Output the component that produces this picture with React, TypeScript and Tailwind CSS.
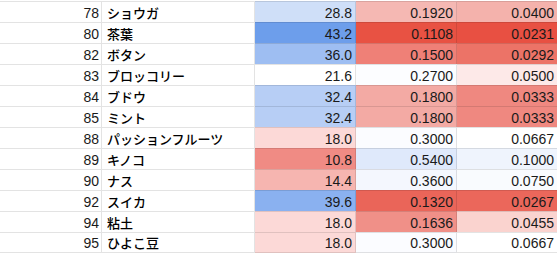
import React from "react";

type Row = {
  n: number;
  name: string;
  c: string;
  d: string;
  e: string;
  cc: string;
  dc: string;
  ec: string;
};

const rows: Row[] = [
  { n: 78, name: "ショウガ", c: "28.8", d: "0.1920", e: "0.0400", cc: "#cfdff8", dc: "#f5b8b3", ec: "#f4b2ac" },
  { n: 80, name: "茶葉", c: "43.2", d: "0.1108", e: "0.0231", cc: "#6d9eeb", dc: "#e85243", ec: "#e85042" },
  { n: 82, name: "ボタン", c: "36.0", d: "0.1500", e: "0.0292", cc: "#9ebef2", dc: "#ef8077", ec: "#ec7367" },
  { n: 83, name: "ブロッコリー", c: "21.6", d: "0.2700", e: "0.0500", cc: "#ffffff", dc: "#fcfdff", ec: "#fde9e8" },
  { n: 84, name: "ブドウ", c: "32.4", d: "0.1800", e: "0.0333", cc: "#b7cef5", dc: "#f3aaa4", ec: "#ef8880" },
  { n: 85, name: "ミント", c: "32.4", d: "0.1800", e: "0.0333", cc: "#b7cef5", dc: "#f3aaa4", ec: "#ef8880" },
  { n: 88, name: "パッションフルーツ", c: "18.0", d: "0.3000", e: "0.0667", cc: "#fcd9d7", dc: "#fbfcff", ec: "#ffffff" },
  { n: 89, name: "キノコ", c: "10.8", d: "0.5400", e: "0.1000", cc: "#f08b84", dc: "#dfe9fb", ec: "#eff4fd" },
  { n: 90, name: "ナス", c: "14.4", d: "0.3600", e: "0.0750", cc: "#f6b5b0", dc: "#f4f7fe", ec: "#f9fbfe" },
  { n: 92, name: "スイカ", c: "39.6", d: "0.1320", e: "0.0267", cc: "#8ab1f0", dc: "#ea6559", ec: "#eb675b" },
  { n: 94, name: "粘土", c: "18.0", d: "0.1636", e: "0.0455", cc: "#fcd9d7", dc: "#f09088", ec: "#fad3cf" },
  { n: 95, name: "ひよこ豆", c: "18.0", d: "0.3000", e: "0.0667", cc: "#fcd9d7", dc: "#fbfcff", ec: "#ffffff" },
];

const num = "font-['Liberation_Sans',Arial,sans-serif] text-[14px] text-[#1a1a1a]";

export default function App() {
  return (
    <div className="w-[557px] h-[255px] overflow-hidden bg-white">
      <div className="h-[1px] w-[600px] bg-white" />
      <div className="flex flex-col w-[600px]">
        {rows.map((r, i) => (
          <div key={r.n} className="flex h-[21px]">
            <div
              className={`w-[102px] shrink-0 h-full border-t border-r border-black/[0.11] ${i === rows.length - 1 ? "border-b h-[22px]" : ""} flex items-center justify-end pr-[2px] pt-[1px] leading-[20px] ${num}`}
            >
              {r.n}
            </div>
            <div
              className={`w-[153px] shrink-0 h-full border-t border-r border-black/[0.11] ${i === rows.length - 1 ? "border-b h-[22px]" : ""} flex items-center pl-[5px] pt-[1px] leading-[20px] font-['Noto_Sans_CJK_JP',sans-serif] font-medium text-[13px] text-black whitespace-nowrap`}
            >
              {r.name}
            </div>
            <div
              className={`w-[101px] shrink-0 h-full border-t border-r border-black/[0.11] ${i === rows.length - 1 ? "border-b h-[22px]" : ""} flex items-center justify-end pr-[3px] pt-[1px] leading-[20px] ${num}`}
              style={{ backgroundColor: r.cc }}
            >
              {r.c}
            </div>
            <div
              className={`w-[101px] shrink-0 h-full border-t border-r border-black/[0.11] ${i === rows.length - 1 ? "border-b h-[22px]" : ""} flex items-center justify-end pr-[3px] pt-[1px] leading-[20px] ${num}`}
              style={{ backgroundColor: r.dc }}
            >
              {r.d}
            </div>
            <div
              className={`w-[101px] shrink-0 h-full border-t border-r border-black/[0.11] ${i === rows.length - 1 ? "border-b h-[22px]" : ""} flex items-center justify-end pr-[3px] pt-[1px] leading-[20px] ${num}`}
              style={{ backgroundColor: r.ec }}
            >
              {r.e}
            </div>
          </div>
        ))}
      </div>
    </div>
  );
}
